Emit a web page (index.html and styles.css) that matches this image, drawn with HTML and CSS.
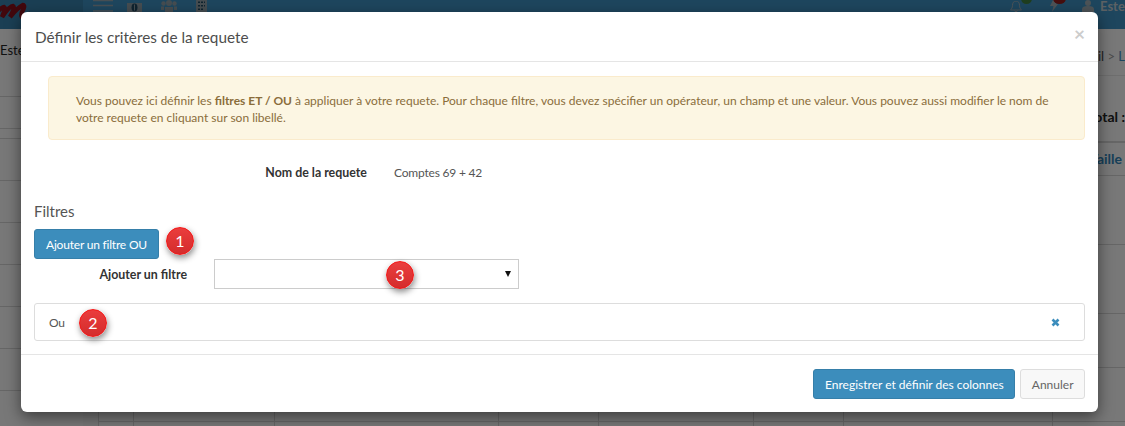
FILE: index.html
```html
<!DOCTYPE html>
<html lang="fr">
<head>
<meta charset="utf-8">
<title>Définir les critères de la requete</title>
<link rel="stylesheet" href="styles.css">
</head>
<body>
<div class="page">
  <header class="navbar">
    <div class="logo">
      <svg class="logo-mark" width="83" height="29" viewBox="0 0 83 29"><path d="M-3 12c3-3 5-5 7-5 2 1 0 5-2 10 4-6 8-11 11-11 2 1 0 6-3 11 4-5 9-10 13-12 2 0 1 4-1 7-1 3-1 6 2 6 3-1 5-3 7-5" fill="none" stroke="#84111a" stroke-width="4.500"/></svg>
    </div>
    <nav class="nav-left">
      <svg width="20" height="12" viewBox="0 0 20 12"><path d="M0 .5h20M0 5.500h20M0 11h20" stroke="#8f9fa9" stroke-width="1.400"/></svg>
      <svg class="ico-money" width="15" height="9" viewBox="0 0 15 9"><path d="M0 0h15v9H0z" fill="#8c9aa3"/><ellipse cx="7.500" cy="4.500" rx="3" ry="4" fill="#1e465e"/><path d="M7 1.500h1v6H7z" fill="#8c9aa3"/></svg>
      <svg class="ico-people" width="16" height="12" viewBox="0 0 16 12"><circle cx="8" cy="3" r="3" fill="#8c9aa3"/><circle cx="2.500" cy="3.500" r="2.200" fill="#8c9aa3"/><circle cx="13.500" cy="3.500" r="2.200" fill="#8c9aa3"/><path d="M4 12V7h8v5zM0 10V6.500h3V10zM13 10V6.500h3V10z" fill="#8c9aa3"/></svg>
      <svg class="ico-build" width="11" height="12" viewBox="0 0 11 12"><path d="M0 0h11v12H0z" fill="#8c9aa3"/><path d="M2 1.500h2v1.500H2zM5 1.500h2v1.500H5zM8 1.500h1v1.500H8zM2 5h2v1.500H2zM5 5h2v1.500H5zM8 5h1v1.500H8zM2 8.500h2V10H2zM5 8.500h2V10H5z" fill="#1e465e"/></svg>
    </nav>
    <nav class="nav-right">
      <span class="nav-icon ni-bell">
        <svg width="12" height="11" viewBox="0 0 12 11"><path d="M6 0C8.500 0 9.500 2 9.500 4.500c0 2 1 3.500 2 4.500H.5c1-1 2-2.500 2-4.500C2.500 2 3.500 0 6 0zM4.500 9.500c0 1.500 3 1.500 3 0" fill="none" stroke="#9aa7af"/></svg>
        <i class="dot dot-green"></i>
      </span>
      <span class="nav-icon ni-bolt">
        <svg width="8" height="12" viewBox="0 0 8 12"><path d="M3 0h5L6 4h2L2 12l1.500-6H0z" fill="#9aa7af"/></svg>
        <i class="dot dot-red"></i>
      </span>
      <span class="user">
        <svg width="12" height="12" viewBox="0 0 12 12"><circle cx="6" cy="3" r="3" fill="#9aa7af"/><path d="M0 12V9c0-2 2-3 6-3s6 1 6 3v3z" fill="#9aa7af"/></svg>
        <span>Estelle</span>
      </span>
    </nav>
  </header>
  <div class="layout">
    <aside class="sidebar">
      <div class="side-user">Estelle</div>
      <div class="side-a"></div>
      <div class="side-b"></div>
      <div class="side-item"></div>
      <div class="side-item"></div>
      <div class="side-item"></div>
      <div class="side-item"></div>
      <div class="side-item"></div>
      <div class="side-item"></div>
    </aside>
    <main class="main">
      <div class="crumb">Accueil <span class="crumb-sep">&gt;</span> <span class="crumb-link">L</span></div>
      <div class="total">Total :</div>
      <table class="grid">
        <colgroup><col class="c1"><col class="c2"><col class="c3"><col class="c4"><col class="c5"><col class="c6"><col class="c7"><col class="c8"></colgroup>
        <tr class="r-head"><td></td><td></td><td></td><td></td><td></td><td></td><td></td><td class="taille">Taille</td></tr>
        <tr class="r-tall"><td></td><td></td><td></td><td></td><td></td><td></td><td></td><td></td></tr>
        <tr class="r-tall"><td></td><td></td><td></td><td></td><td></td><td></td><td></td><td></td></tr>
        <tr class="r-mid"><td></td><td></td><td></td><td></td><td></td><td></td><td></td><td></td></tr>
        <tr class="r-mid"><td></td><td></td><td></td><td></td><td></td><td></td><td></td><td></td></tr>
        <tr class="r-mid"><td></td><td></td><td></td><td></td><td></td><td></td><td></td><td></td></tr>
      </table>
    </main>
  </div>
</div>
<div class="backdrop"></div>
<section class="modal">
  <div class="modal-header">
    <h4 class="modal-title">Définir les critères de la requete</h4>
    <span class="close">×</span>
  </div>
  <div class="modal-body">
    <div class="alert">Vous pouvez ici définir les <b>filtres ET / OU</b> à appliquer à votre requete. Pour chaque filtre, vous devez spécifier un opérateur, un champ et une valeur. Vous pouvez aussi modifier le nom de votre requete en cliquant sur son libellé.</div>
    <div class="name-row">
      <label class="name-label">Nom de la requete</label>
      <span class="value">Comptes 69 + 42</span>
    </div>
    <h4 class="filters-title">Filtres</h4>
    <button class="btn btn-primary btn-add">Ajouter un filtre OU</button>
    <div class="add-row">
      <label class="add-label">Ajouter un filtre</label>
      <div class="select"><i class="caret"></i></div>
    </div>
    <div class="or-panel">
      <span class="value">Ou</span>
      <svg class="remove" width="9" height="9" viewBox="0 0 9 9"><path d="M1.500 1.500l6 6M7.500 1.500l-6 6" stroke="#3c8dbc" stroke-width="2.600"/></svg>
    </div>
  </div>
  <div class="modal-footer">
    <button class="btn btn-primary">Enregistrer et définir des colonnes</button>
    <button class="btn btn-default">Annuler</button>
  </div>
  <span class="marker m1">1</span>
  <span class="marker m2">2</span>
  <span class="marker m3">3</span>
</section>
</body>
</html>
```
FILE: styles.css
```css
* { box-sizing: border-box; }
html, body { margin: 0; height: 100%; }
body {
  width: 1125px;
  height: 426px;
  overflow: hidden;
  position: relative;
  font-family: "Lato", "Liberation Sans", sans-serif;
  font-size: 12px;
  color: #333;
  background: #f0f0f0;
}
.page { width: 1125px; height: 426px; overflow: hidden; }
.navbar { height: 29px; display: flex; background: #3c8dbc; }
.logo { width: 83px; height: 29px; background: #367fa9; flex: none; }
.logo-mark { display: block; }
.nav-left { display: flex; align-items: flex-start; padding-left: 10px; }
.ico-money { margin: 3px 0 0 14px; }
.ico-people { margin-left: 19px; }
.ico-build { margin-left: 19px; }
.nav-right { margin-left: auto; width: 115px; flex: none; display: flex; align-items: flex-start; overflow: hidden; }
.nav-icon { position: relative; display: block; height: 12px; flex: none; }
.ni-bell { width: 12px; margin-right: 28px; }
.ni-bolt { width: 8px; margin-right: 24px; }
.dot { position: absolute; top: -7px; width: 11px; height: 11px; border-radius: 50%; }
.dot-green { left: 11px; background: #3f7d3f; }
.dot-red { left: 3px; width: 13px; background: #8c1f1f; }
.user { display: flex; gap: 6px; color: #b9c3c9; font-weight: 700; font-size: 13px; line-height: 12px; flex: none; }
.layout { display: flex; height: 397px; }
.sidebar { width: 83px; flex: none; background: #f0f0f0; overflow: hidden; }
.side-user { height: 68px; padding-top: 13px; line-height: 16px; font-size: 13px; color: #222; border-bottom: 1px solid #ccc; }
.side-a { height: 32px; border-bottom: 1px solid #ccc; }
.side-b { height: 10px; border-bottom: 1px solid #ccc; }
.side-item { height: 42px; border-bottom: 1px solid #ccc; }
.main { flex: 1; min-width: 0; padding-left: 15px; background: #ececec; }
.crumb { height: 47px; padding-top: 18px; line-height: 18px; font-size: 13px; text-align: right; border-bottom: 1px solid #ddd; white-space: nowrap; color: #444; background: #f0f0f0; margin-left: -15px; }
.crumb-sep { color: #999; }
.crumb-link { color: #3c8dbc; }
.total { height: 66px; padding-top: 32px; line-height: 18px; text-align: right; font-weight: 700; color: #222; font-size: 14px; white-space: nowrap; background: #f0f0f0; margin-left: -15px; border-bottom: 1px solid #ccc; }
.grid { width: 1027px; table-layout: fixed; border-collapse: collapse; background: #f0f0f0; }
.c1 { width: 35px; } .c2 { width: 141px; } .c3 { width: 224px; } .c4 { width: 100px; }
.c5 { width: 155px; } .c6 { width: 90px; } .c7 { width: 209px; } .c8 { width: 73px; }
.grid td { border: 1px solid #ccc; padding: 0; }
.r-head { height: 33px; }
.r-tall { height: 69px; }
.r-mid { height: 54px; }
.grid .taille { text-align: right; vertical-align: top; font-weight: 700; color: #2f7fb0; font-size: 14px; padding: 7px 3px 0 0; line-height: 18px; }

.backdrop { position: absolute; inset: 0; background: rgba(0, 0, 0, .5); }
.modal {
  position: absolute;
  left: 21px;
  top: 12px;
  width: 1077px;
  height: 400px;
  background: #fff;
  border-radius: 6px;
  box-shadow: 0 5px 15px rgba(0, 0, 0, .5);
  display: flex;
  flex-direction: column;
}
.modal-header { height: 50px; padding: 14px; border-bottom: 1px solid #e5e5e5; display: flex; justify-content: space-between; }
.modal-title { margin: 0; font-size: 15.300px; font-weight: 400; line-height: 22px; color: #4d4d4d; }
.close { font-size: 19px; font-weight: 700; line-height: 16px; color: #ccc; margin-right: -1px; }
.modal-body { flex: 1; padding: 14px 13px 0; }
.alert {
  margin-left: 14px;
  height: 64px;
  padding: 15px 27px 0;
  line-height: 17px;
  color: #8a6d3b;
  background: #fcf6e3;
  border: 1px solid #faebcc;
  border-radius: 4px;
}
.value { font-size: 12px; letter-spacing: -.2px; color: #555; }
.name-row { display: flex; gap: 27px; margin-top: 23px; line-height: 20px; }
.name-label { width: 333px; text-align: right; font-weight: 700; font-size: 12.400px; }
.filters-title { margin: 18px 0 8px 0; font-size: 15px; font-weight: 400; line-height: 20px; color: #555; }
.btn { display: block; height: 30px; padding: 0 11px; border-radius: 3px; font: inherit; cursor: pointer; }
.btn-primary { background: #3c8dbc; border: 1px solid #367fa9; color: #fff; padding: 0 10.500px; }
.btn-default { background: #f8f8f8; border: 1px solid #ddd; color: #666; padding: 0 10.500px; }
.btn-add { padding: 0 11px; letter-spacing: -.2px; }
.add-row { display: flex; gap: 27px; align-items: center; }
.add-label { width: 153px; text-align: right; font-weight: 700; font-size: 12.400px; }
.select { width: 305px; height: 30px; border: 1px solid #ccc; display: flex; align-items: center; justify-content: flex-end; padding-right: 7px; }
.caret { width: 0; height: 0; border-left: 3px solid transparent; border-right: 3px solid transparent; border-top: 6px solid #111; }
.or-panel { margin-top: 14px; height: 38px; padding: 0 24px 0 14px; border: 1px solid #ddd; border-radius: 3px; display: flex; align-items: center; justify-content: space-between; }
.modal-footer { height: 58px; border-top: 1px solid #e5e5e5; padding: 14px 13px; display: flex; justify-content: flex-end; gap: 5px; }
.marker {
  position: absolute;
  width: 28px;
  height: 28px;
  border-radius: 50%;
  border: 1.500px solid #f41515;
  background: linear-gradient(#ea3d3d, #d42c2c);
  color: #fff;
  font-size: 16px;
  line-height: 25px;
  text-align: center;
  box-shadow: 1px 3px 6px rgba(0, 0, 0, .45);
}
.m1 { left: 145px; top: 215px; }
.m2 { left: 58px; top: 297px; }
.m3 { left: 365px; top: 249px; }
```
